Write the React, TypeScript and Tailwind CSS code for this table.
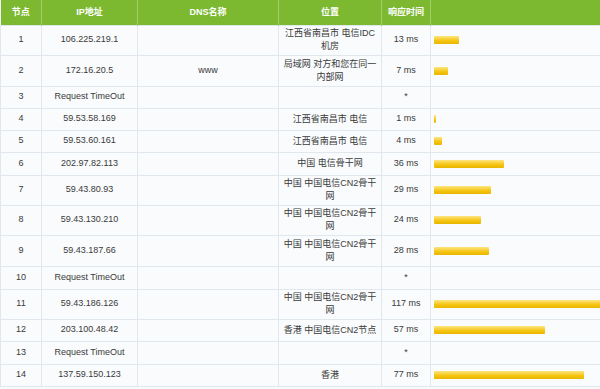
type Hop = {
  n: number;
  ip: string;
  dns?: string;
  loc?: string[];
  ms?: number;
  h: string;
};

const hops: Hop[] = [
  { n: 1, ip: "106.225.219.1", loc: ["江西省南昌市 电信IDC", "机房"], ms: 13, h: "h-[30px]" },
  { n: 2, ip: "172.16.20.5", dns: "www", loc: ["局域网 对方和您在同一", "内部网"], ms: 7, h: "h-[31px]" },
  { n: 3, ip: "Request TimeOut", h: "h-[22px]" },
  { n: 4, ip: "59.53.58.169", loc: ["江西省南昌市 电信"], ms: 1, h: "h-[22px]" },
  { n: 5, ip: "59.53.60.161", loc: ["江西省南昌市 电信"], ms: 4, h: "h-[22px]" },
  { n: 6, ip: "202.97.82.113", loc: ["中国 电信骨干网"], ms: 36, h: "h-[23px]" },
  { n: 7, ip: "59.43.80.93", loc: ["中国 中国电信CN2骨干", "网"], ms: 29, h: "h-[30px]" },
  { n: 8, ip: "59.43.130.210", loc: ["中国 中国电信CN2骨干", "网"], ms: 24, h: "h-[30px]" },
  { n: 9, ip: "59.43.187.66", loc: ["中国 中国电信CN2骨干", "网"], ms: 28, h: "h-[31px]" },
  { n: 10, ip: "Request TimeOut", h: "h-[23px]" },
  { n: 11, ip: "59.43.186.126", loc: ["中国 中国电信CN2骨干", "网"], ms: 117, h: "h-[30px]" },
  { n: 12, ip: "203.100.48.42", loc: ["香港 中国电信CN2节点"], ms: 57, h: "h-[22px]" },
  { n: 13, ip: "Request TimeOut", h: "h-[23px]" },
  { n: 14, ip: "137.59.150.123", loc: ["香港"], ms: 77, h: "h-[22px]" },
];

const cell = "border border-[#e1e8ed] text-center align-middle p-0";

export default function App() {
  return (
    <div
      className="w-[600px] h-[389px] overflow-hidden bg-[#f7fafb] text-[#3a3a3a] text-[9px]"
      style={{ fontFamily: '"Liberation Sans", "Noto Sans CJK SC", sans-serif' }}
    >
      <table className="w-[600px] table-fixed border-collapse">
        <colgroup>
          <col className="w-[41px]" />
          <col className="w-[96px]" />
          <col className="w-[141px]" />
          <col className="w-[103px]" />
          <col className="w-[49px]" />
          <col className="w-[170px]" />
        </colgroup>
        <thead>
          <tr className="h-[25px] bg-[#7cb930] text-white">
            <th className="border-r border-[#a0cf68] font-bold">节点</th>
            <th className="border-r border-[#a0cf68] font-bold">IP地址</th>
            <th className="border-r border-[#a0cf68] font-bold">DNS名称</th>
            <th className="border-r border-[#a0cf68] font-bold">位置</th>
            <th className="border-r border-[#a0cf68] font-bold">响应时间</th>
            <th></th>
          </tr>
        </thead>
        <tbody>
          {hops.map((hop) => (
            <tr key={hop.n} className={hop.h + " bg-[#f9fbfc]"}>
              <td className={cell}>{hop.n}</td>
              <td className={cell}>{hop.ip}</td>
              <td className={cell}>{hop.dns}</td>
              <td className={cell + " leading-[13px]"}>
                {hop.loc?.map((l, i) => (
                  <div key={i}>{l}</div>
                ))}
              </td>
              <td className={cell}>{hop.ms !== undefined ? `${hop.ms} ms` : "*"}</td>
              <td className={cell + " text-left pl-[3px] overflow-hidden"}>
                {hop.ms !== undefined && (
                  <div
                    className="h-[8px] bg-gradient-to-b from-[#fde67a] via-[#f6c814] to-[#e9b500] rounded-[1px]"
                    style={{ width: Math.max(2, Math.round(hop.ms * 1.95)) }}
                  />
                )}
              </td>
            </tr>
          ))}
        </tbody>
      </table>
    </div>
  );
}
